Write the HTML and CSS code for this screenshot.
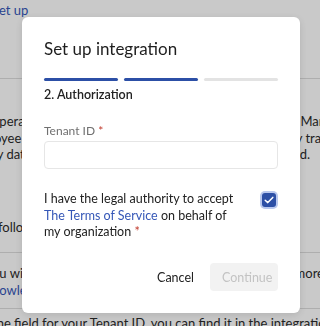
FILE: index.html
```html
<!DOCTYPE html>
<html>
<head>
<meta charset="utf-8">
<link rel="stylesheet" href="styles.css">
</head>
<body>
<div class="page">
  <div class="crumb"><a class="link" href="#">Set up</a></div>
  <hr class="rule rule-top">
  <div class="para">
    <div class="row"><span class="l">operating</span><span class="r r1">Man</span></div>
    <div class="row"><span class="l l2">employee</span><span class="r r2">y track</span></div>
    <div class="row"><span class="l">ry data</span><span class="r r3">d.</span></div>
  </div>
  <div class="para para-2">
    <div class="row"><span class="l l5">following</span><span class="r"></span></div>
  </div>
  <hr class="rule">
  <div class="para para-3">
    <div class="row"><span class="l">ou will</span><span class="r r4">more</span></div>
    <div class="row"><span class="l link">nowledge</span><span class="r"></span></div>
  </div>
  <hr class="rule rule-b">
  <div class="para para-4">
    <div class="row"><span class="l">the field for your Tenant ID, you can find it in the integration settings</span></div>
  </div>
</div>

<div class="overlay">
  <div class="modal" role="dialog">
    <h1 class="title">Set up integration</h1>
    <div class="steps">
      <span class="step done"></span>
      <span class="step done"></span>
      <span class="step"></span>
    </div>
    <h2 class="subtitle">2. Authorization</h2>
    <label class="field-label">Tenant ID <span class="req">*</span></label>
    <input class="input" type="text">
    <div class="consent">
      <p class="consent-text">I have the legal authority to accept<br><a class="link" href="#">The Terms of Service</a> on behalf of<br>my organization <span class="req">*</span></p>
      <span class="checkbox">
        <svg width="10" height="8" viewBox="0 0 10 8"><path d="M1.2 4.2 L3.8 6.6 L8.8 1.4" fill="none" stroke="#fff" stroke-width="1.5" stroke-linecap="round" stroke-linejoin="round"/></svg>
      </span>
    </div>
    <div class="actions">
      <button class="btn btn-text">Cancel</button>
      <button class="btn btn-disabled">Continue</button>
    </div>
  </div>
</div>
</body>
</html>
```

FILE: styles.css
```css
* { box-sizing: border-box; }
html, body { margin: 0; padding: 0; }
body {
  width: 320px;
  height: 326px;
  overflow: hidden;
  background: #ffffff;
  font-family: Lato, "Liberation Sans", sans-serif;
  color: #2b2b2b;
}
.page {
  width: 320px;
  overflow: hidden;
  font-size: 13px;
  line-height: 16.5px;
}
.crumb {
  padding-top: 2px;
  margin-left: -8px;
  height: 20px;
}
.link { color: #3557b7; text-decoration: none; }
.rule {
  border: 0;
  border-top: 1px solid #dddddd;
  margin: 0;
}
.rule-top { margin-top: 58px; }
.para { padding-top: 34px; }
.para-2 { padding-top: 56px; padding-bottom: 17px; }
.para-3 { padding-top: 12px; padding-bottom: 10px; }
.para-4 { padding-top: 6px; }
.row {
  display: flex;
  justify-content: space-between;
  white-space: nowrap;
  height: 16.5px;
}
.l { margin-left: -8px; }
.l2 { margin-left: -34px; }
.l5 { margin-left: -2px; }
.r1 { margin-right: -6px; }
.r2 { margin-right: -14px; }
.r3 { margin-right: 10px; }
.r4 { margin-right: -4px; }

.overlay {
  position: fixed;
  inset: 0;
  background: rgba(0, 0, 0, 0.21);
}
.modal {
  position: absolute;
  left: 22px;
  top: 17px;
  width: 278px;
  height: 296px;
  background: #ffffff;
  border-radius: 6px;
  box-shadow: 0 2px 8px rgba(0,0,0,0.12);
  padding: 20px 22px 22px;
  display: flex;
  flex-direction: column;
}
.title {
  margin: 0;
  font-size: 17px;
  font-weight: 400;
  line-height: 24px;
  color: #1e1e1e;
}
.steps {
  display: flex;
  gap: 6px;
  margin-top: 17px;
}
.step {
  flex: 1;
  height: 3px;
  border-radius: 2px;
  background: #e3e3e3;
}
.step.done { background: #2c4fa6; }
.subtitle {
  margin: 5px 0 0;
  font-size: 12.5px;
  font-weight: 600;
  line-height: 18px;
  color: #222;
}
.field-label {
  margin-top: 19px;
  font-size: 12px;
  line-height: 16px;
  color: #707070;
}
.req { color: #c0392b; }
.input {
  margin-top: 2px;
  height: 28px;
  width: 100%;
  border: 1px solid #e6e6e6;
  border-radius: 4px;
  background: #fff;
}
.consent {
  margin-top: 22px;
  display: flex;
  justify-content: space-between;
  align-items: flex-start;
}
.consent-text {
  margin: 0;
  width: 200px;
  font-size: 12.5px;
  line-height: 16.5px;
  color: #222;
}
.checkbox {
  width: 14px;
  height: 14px;
  margin-top: 2px;
  margin-right: 2px;
  border-radius: 3px;
  background: #2c4fa6;
  box-shadow: 0 0 0 2px #b9c8ee;
  display: flex;
  align-items: center;
  justify-content: center;
}
.actions {
  margin-top: auto;
  display: flex;
  justify-content: flex-end;
  align-items: center;
  gap: 16px;
}
.btn {
  font-family: inherit;
  font-size: 12.5px;
  border: 0;
  border-radius: 4px;
  height: 28px;
  padding: 0 12px;
  background: transparent;
}
.btn-text { color: #222; padding: 0; }
.btn-disabled {
  background: #f2f2f2;
  color: #c3c3c3;
  width: 68px;
}
```
